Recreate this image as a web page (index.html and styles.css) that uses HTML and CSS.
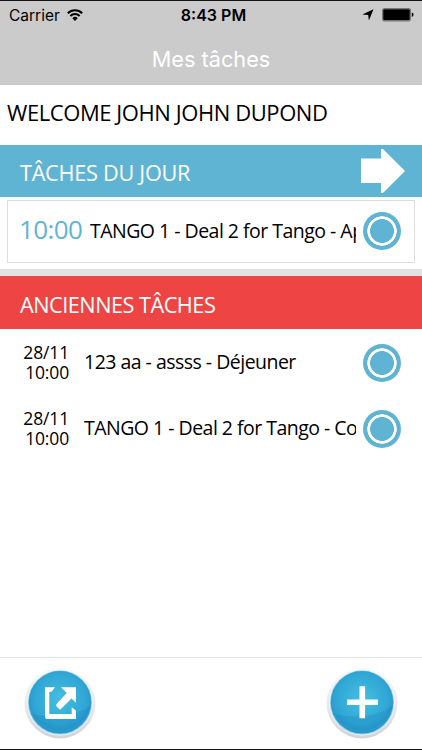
FILE: index.html
```html
<!DOCTYPE html>
<html lang="fr">
<head>
  <meta charset="UTF-8" />
  <meta name="viewport" content="width=device-width, initial-scale=1.0"/>
  <title>Mes tâches</title>
  <link rel="stylesheet" href="styles.css">
</head>
<body>
  <div class="screen">
    <header>
      <div class="status-bar">
        <div class="carrier">
          <span>Carrier</span>
          <svg width="16" height="13" viewBox="0 0 16 13">
            <path d="M0.8 4.2a10.200 10.200 0 0 1 14.400 0M3.300 7a6.700 6.700 0 0 1 9.400 0" fill="none" stroke="#000" stroke-width="2"/>
            <path d="M5.300 9.200a3.800 3.800 0 0 1 5.400 0L8 12z"/>
          </svg>
        </div>
        <div class="clock">8:43 PM</div>
        <div class="indicators">
          <svg width="12" height="12" viewBox="0 0 12 12">
            <path d="M11.5 .3L6.900 11.500 6.200 6 0.300 5.500z"/>
          </svg>
          <svg width="32" height="14" viewBox="0 0 32 14">
            <rect x=".5" y=".5" width="28" height="12.5" rx="1.5" fill="none" stroke="#777"/>
            <rect x="1.2" y="1.2" width="26.6" height="11.1" rx="1"/>
            <path d="M29.8 4.5q1.8 .6 1.8 2.2t-1.8 2.2z"/>
          </svg>
        </div>
      </div>
      <h1>Mes tâches</h1>
    </header>

    <main>
      <p class="welcome">WELCOME JOHN JOHN DUPOND</p>

      <section>
        <div class="section-title today">
          <h2>TÂCHES DU JOUR</h2>
          <svg width="44" height="44" viewBox="0 0 44 44">
            <path d="M0 9.5h20V0h2l22 22-22 22h-2V34H0z" fill="#fff"/>
          </svg>
        </div>
        <div class="task current">
          <span class="time">10:00</span>
          <span class="name">TANGO 1 - Deal 2 for Tango - Appel</span>
          <span class="radio"></span>
        </div>
      </section>

      <section class="past">
        <div class="section-title late">
          <h2>ANCIENNES TÂCHES</h2>
        </div>
        <div class="task">
          <span class="date">28/11<br>10:00</span>
          <span class="name">123 aa - assss - Déjeuner</span>
          <span class="radio"></span>
        </div>
        <div class="task">
          <span class="date">28/11<br>10:00</span>
          <span class="name">TANGO 1 - Deal 2 for Tango - Courrier</span>
          <span class="radio"></span>
        </div>
      </section>
    </main>

    <footer>
      <button class="round" aria-label="Exporter">
        <svg width="74" height="74" viewBox="0 0 74 74">
          <defs>
            <linearGradient id="rim" x1="0" y1="0" x2="0" y2="1">
              <stop offset="0" stop-color="#fcfcfc"/>
              <stop offset=".5" stop-color="#e9eaf0"/>
              <stop offset="1" stop-color="#d2d2da"/>
            </linearGradient>
            <radialGradient id="disc" cx=".5" cy=".45" r=".56">
              <stop offset="0" stop-color="#45bfe0"/>
              <stop offset=".75" stop-color="#30a6d5"/>
              <stop offset="1" stop-color="#2892c6"/>
            </radialGradient>
          </defs>
          <circle cx="37" cy="36" r="35.5" fill="url(#rim)"/>
          <circle cx="37" cy="35.5" r="33" fill="#f1f2f5"/>
          <circle cx="37" cy="35.6" r="32" fill="#8ad0e8"/>
          <circle cx="37" cy="35.3" r="31.2" fill="url(#disc)"/>
          <path d="M10 47.500Q48 54 67.600 38.500A31.200 31.200 0 0 1 10 47.500z" fill="#1578b5" opacity=".22"/>
          <path d="M22 20.300h10l-3.300 4.400h-2.400V47h22.400v-6.700l4.300 3.400V52H24.500Q22 52 22 49.500z" fill="#fff"/>
          <path d="M38 20.300h15v15.400l-4.500-4.200-10.800 10.800q-1 .5-2-.8l-2.200-2.300q-1-1.300.3-2.500L43.700 26z" fill="#fff"/>
        </svg>
      </button>
      <button class="round" aria-label="Ajouter">
        <svg width="74" height="74" viewBox="0 0 74 74">
          <circle cx="37" cy="36" r="35.5" fill="url(#rim)"/>
          <circle cx="37" cy="35.5" r="33" fill="#f1f2f5"/>
          <circle cx="37" cy="35.6" r="32" fill="#8ad0e8"/>
          <circle cx="37" cy="35.3" r="31.2" fill="url(#disc)"/>
          <path d="M10 47.500Q48 54 67.600 38.500A31.200 31.200 0 0 1 10 47.500z" fill="#1578b5" opacity=".22"/>
          <path d="M37.300 19.300v32M22 35.300h31" stroke="#fff" stroke-width="5.600"/>
        </svg>
      </button>
    </footer>
  </div>
</body>
</html>
```
FILE: styles.css
```css
:root {
  --blue: #5fb4d4;
  --red: #ee4444;
  --bar: #cbcbcb;
}

* {
  box-sizing: border-box;
}

body {
  margin: 0;
  background-color: #fff;
  color: #000;
  font-family: "Open Sans", "Noto Sans", sans-serif;
  font-stretch: 90%;
}

h1, h2, p {
  margin: 0;
  font-weight: 400;
}

.screen {
  display: flex;
  flex-direction: column;
  height: 750px;
  overflow: hidden;
  border-top: 1px solid #151515;
  border-bottom: 1px solid #151515;
}

header {
  height: 84px;
  background-color: var(--bar);
  font-family: Inter, Roboto, sans-serif;
}

.status-bar {
  display: grid;
  grid-template-columns: 1fr auto 1fr;
  align-items: center;
  height: 28px;
  padding: 0 8px 0 9px;
  font-size: 16px;
}

.carrier {
  display: flex;
  align-items: center;
  gap: 7px;
  font-size: 15.5px;
}

.clock {
  padding-left: 4px;
  font-weight: 600;
}

.indicators {
  display: flex;
  align-items: center;
  justify-content: flex-end;
  gap: 8px;
}

h1 {
  color: #fff;
  font-size: 21.7px;
  line-height: 60px;
  text-align: center;
}

.welcome {
  height: 60px;
  padding-left: 7px;
  font-size: 22px;
  letter-spacing: -0.42px;
  line-height: 55px;
  white-space: nowrap;
}

.section-title {
  display: flex;
  align-items: center;
  justify-content: space-between;
  height: 52px;
  padding: 0 17px 0 20px;
  color: #fff;
}

.section-title h2 {
  padding-top: 2px;
  font-size: 21.7px;
  letter-spacing: -0.27px;
}

.today {
  background-color: var(--blue);
}

.late {
  height: 53px;
  padding-top: 2px;
  background-color: var(--red);
}

.late h2 {
  letter-spacing: -0.5px;
}

.past {
  border-top: 7px solid #e2e2e2;
}

.task {
  display: flex;
  align-items: center;
  height: 66px;
  padding-right: 21px;
}

.task .name {
  flex: 1;
  margin-right: 7px;
  padding-bottom: 2px;
  overflow: hidden;
  font-size: 19.5px;
  letter-spacing: -0.52px;
  white-space: nowrap;
}

.task .date {
  width: 84px;
  padding-right: 15px;
  font-size: 17.5px;
  letter-spacing: -0.15px;
  line-height: 20px;
  text-align: right;
}

.current {
  height: 63px;
  margin: 3px 7px 6px;
  padding: 0 13px 2px 11px;
  border: 1px solid #ddd;
}

.current .time {
  width: 71px;
  padding-bottom: 3px;
  color: var(--blue);
  font-size: 26px;
  letter-spacing: -0.6px;
}

.current .name {
  padding-bottom: 1px;
}

.radio {
  width: 38px;
  height: 38px;
  margin-top: 2px;
  border-radius: 50%;
  background: radial-gradient(circle, var(--blue) 11.6px, #fff 12.2px, #fff 14.4px, var(--blue) 15px);
}

.current .radio {
  margin-top: 0;
}

footer {
  display: flex;
  justify-content: space-between;
  height: 92px;
  margin-top: auto;
  padding: 9px 23px 0;
  border-top: 1px solid #e2e2e2;
}

.round {
  width: 74px;
  height: 74px;
  padding: 0;
  border: none;
  background: none;
}
```
